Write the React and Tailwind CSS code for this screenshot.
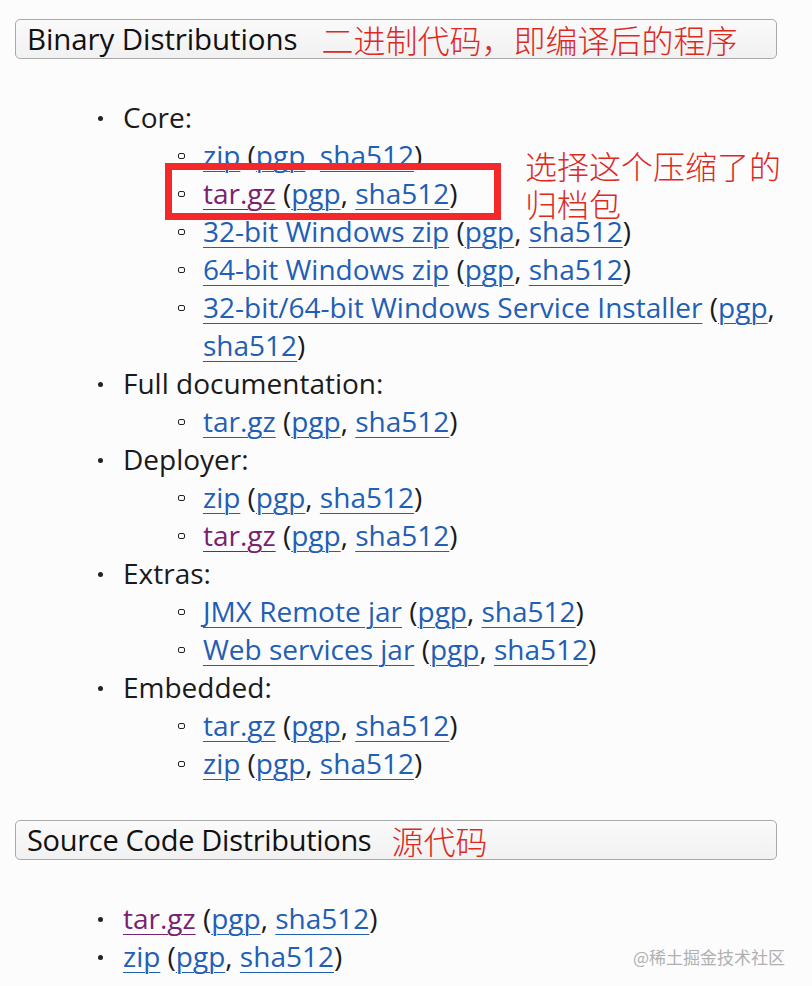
import React from "react";

const blue = "text-[#1f5fb4]";
const visited = "text-[#7b1f6f]";

const A = ({ children, v }) => (
  <a href="#" className={`${v ? visited : blue} underline decoration-1 underline-offset-[5px]`}>
    {children}
  </a>
);

const Sig = () => (
  <>
    {" ("}
    <A>pgp</A>, <A>sha512</A>)
  </>
);

const Sub = ({ children }) => (
  <li className="relative pl-[23px]">
    <span className="absolute left-[-2px] top-[17px] h-[6px] w-[7px] border border-[#222] rounded-[2px]" />
    {children}
  </li>
);

const Top = ({ label, children }) => (
  <li className="relative pl-[23px]">
    <span className="absolute left-[-2px] top-[18px] h-[5px] w-[5px] rounded-full bg-[#222]" />
    {label}
    {children && <ul className="ml-[57px]">{children}</ul>}
  </li>
);

const Header = ({ title, note, tight }) => (
  <div className="ml-[15px] w-[762px] h-[40px] rounded-[5px] border border-[#a9a9a9] bg-gradient-to-b from-[#fafafa] to-[#f1f1f1] flex items-center pl-[11px]">
    <span className={`text-[#111] ${tight ? "text-[29px] tracking-[-0.3px]" : "text-[29.5px] tracking-[-0.1px]"}`}>
      {title}
    </span>
    <span
      className={`${tight ? "ml-[20px]" : "ml-[24px]"} text-[#dd2a1f] text-[32px] leading-none`}
      style={{ fontFamily: '"Noto Sans CJK SC", sans-serif', fontWeight: 300 }}
    >
      {note}
    </span>
  </div>
);

export default function App() {
  return (
    <div
      className="relative w-[812px] h-[986px] bg-[#fcfcfd] overflow-hidden pt-[19px] text-[28px] leading-[38px] text-[#1a1a1a]"
      style={{ fontFamily: '"Open Sans", "Noto Sans CJK SC", sans-serif' }}
    >
      <Header title="Binary Distributions" note="二进制代码，即编译后的程序" />
      <ul className="ml-[100px] mt-[39px] w-[690px]">
        <Top label="Core:">
          <Sub><A>zip</A><Sig /></Sub>
          <Sub><A v>tar.gz</A><Sig /></Sub>
          <Sub><A>32-bit Windows zip</A><Sig /></Sub>
          <Sub><A>64-bit Windows zip</A><Sig /></Sub>
          <Sub><A>32-bit/64-bit Windows Service Installer</A><Sig /></Sub>
        </Top>
        <Top label="Full documentation:">
          <Sub><A>tar.gz</A><Sig /></Sub>
        </Top>
        <Top label="Deployer:">
          <Sub><A>zip</A><Sig /></Sub>
          <Sub><A v>tar.gz</A><Sig /></Sub>
        </Top>
        <Top label="Extras:">
          <Sub><A>JMX Remote jar</A><Sig /></Sub>
          <Sub><A>Web services jar</A><Sig /></Sub>
        </Top>
        <Top label="Embedded:">
          <Sub><A>tar.gz</A><Sig /></Sub>
          <Sub><A>zip</A><Sig /></Sub>
        </Top>
      </ul>
      <div className="mt-[38px]">
        <Header title="Source Code Distributions" note="源代码" tight />
      </div>
      <ul className="ml-[100px] mt-[39px]">
        <Top label={<><A v>tar.gz</A><Sig /></>} />
        <Top label={<><A>zip</A><Sig /></>} />
      </ul>

      {/* annotation overlay */}
      <div className="absolute left-[165px] top-[163px] w-[336px] h-[57px] border-[7px] border-[#f2282b]" />
      <div
        className="absolute left-[525px] top-[146px] text-[32px] leading-[38px] text-[#dd2a1f]"
        style={{ fontFamily: '"Noto Sans CJK SC", sans-serif', fontWeight: 300 }}
      >
        选择这个压缩了的
        <br />
        归档包
      </div>
      <div
        className="absolute left-[633px] top-[938px] text-[17px] text-[#b0b0b0]"
        style={{ fontFamily: '"Noto Sans CJK SC", sans-serif' }}
      >
        @稀土掘金技术社区
      </div>
    </div>
  );
}
